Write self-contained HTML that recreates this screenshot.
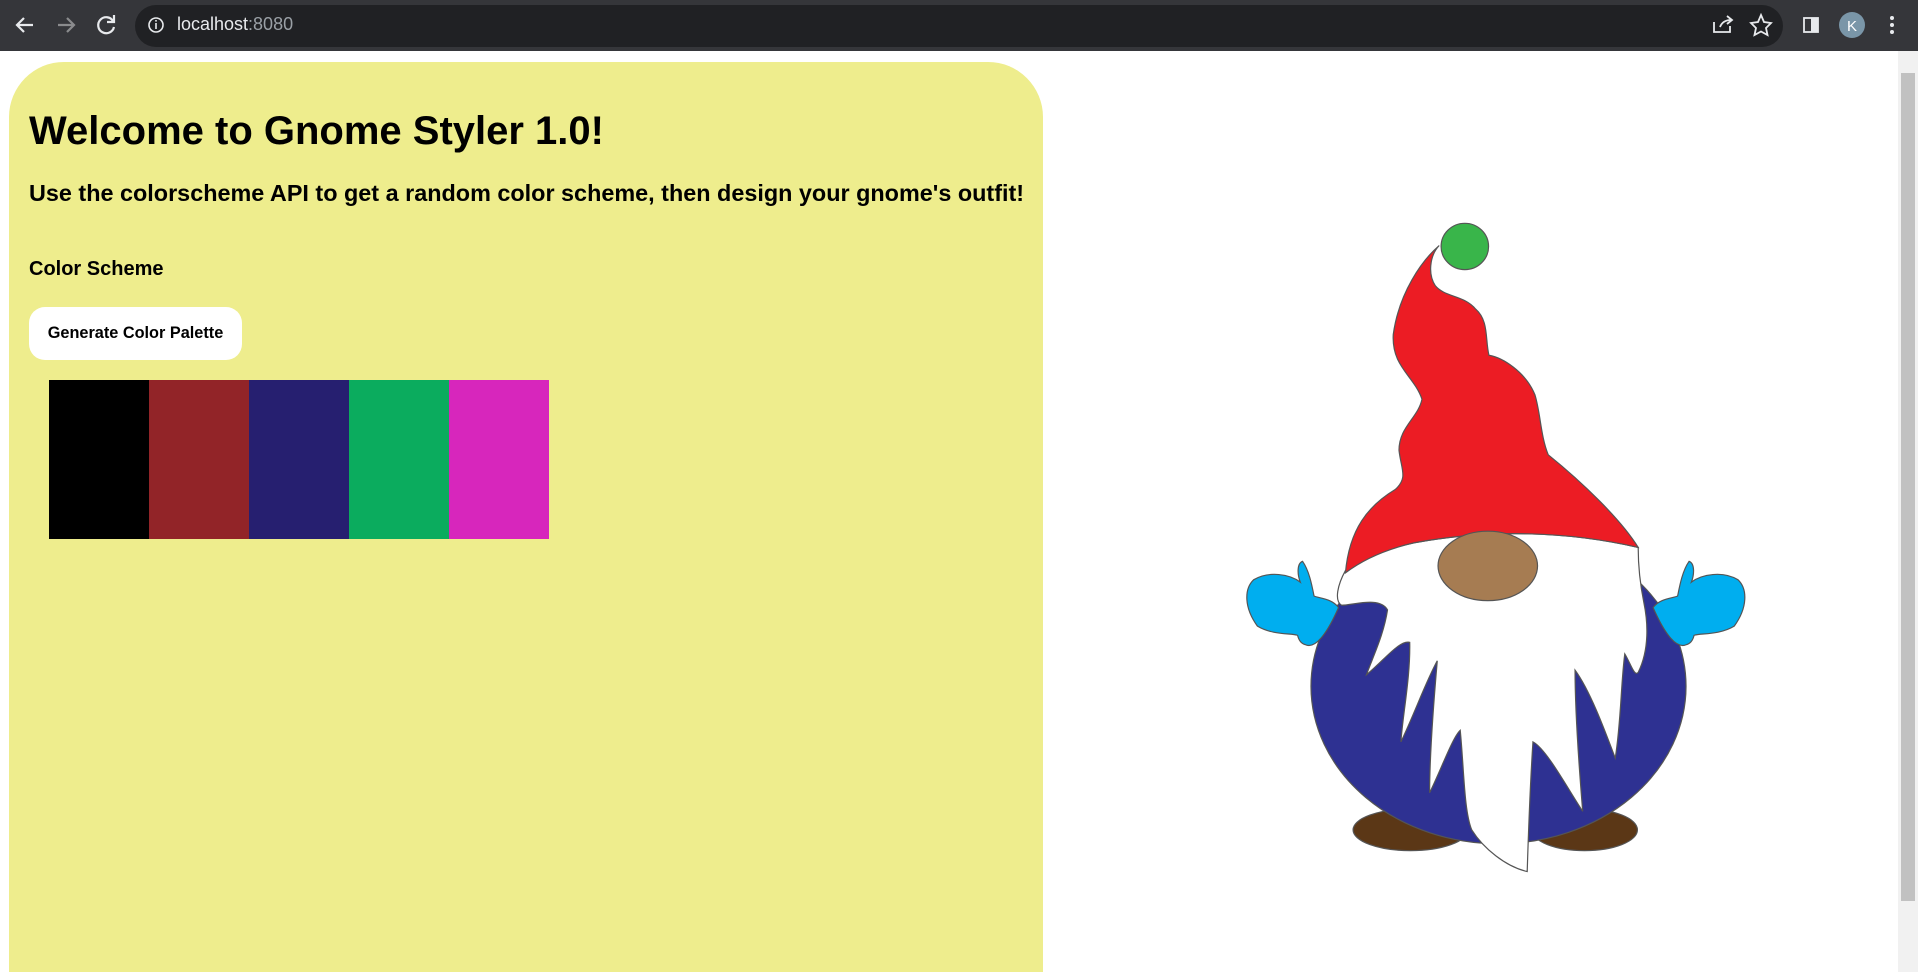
<!DOCTYPE html>
<html><head><meta charset="utf-8"><style>
*{margin:0;padding:0;box-sizing:border-box}
html,body{width:1918px;height:972px;overflow:hidden;background:#fff;font-family:"Liberation Sans",Arial,sans-serif}
.top{position:absolute;left:0;top:0;width:1918px;height:51px;background:#35363a}
.addr{position:absolute;left:135px;top:5px;width:1648px;height:42px;border-radius:21px;background:#202124}
.url{position:absolute;left:177px;top:14px;font-size:18px;color:#e8eaed}
.url span{color:#9aa0a6}
.panel{position:absolute;left:9px;top:62px;width:1034px;height:910px;background:#eeed8d;border-radius:55px 55px 0 0}
h1{position:absolute;left:29px;top:109px;font-size:40px;font-weight:bold;white-space:nowrap}
h3{position:absolute;left:29px;top:180px;font-size:23.4px;font-weight:bold;white-space:nowrap}
.cs{position:absolute;left:29px;top:258px;font-size:20px;font-weight:bold}
.btn{position:absolute;left:29px;top:307px;width:213px;height:53px;background:#fff;border-radius:16px;font-size:16.3px;font-weight:bold;text-align:center;line-height:53px}
.sw{position:absolute;top:380px;width:100px;height:159px}
.sb{position:absolute;left:1898px;top:51px;width:20px;height:921px;background:#f1f1f1}
.th{position:absolute;left:1901px;top:73px;width:14px;height:828px;background:#c1c1c1}
</style></head><body>
<div class="top">
<div class="addr"></div>
<svg width="1918" height="51" style="position:absolute;left:0;top:0">
<g stroke="#e8eaed" stroke-width="2.2" fill="none">
<path d="M33 25H17M24 18l-7 7 7 7"/>
<path d="M58 25h16M67 18l7 7-7 7" stroke="#8a8b8d"/>
<path d="M113 21a8 8 0 1 0 1 6M114 15v7h-7"/>
</g>
<circle cx="156" cy="25" r="7" stroke="#e8eaed" stroke-width="1.6" fill="none"/>
<rect x="155.2" y="23" width="1.6" height="6" fill="#e8eaed"/><rect x="155.2" y="20" width="1.6" height="1.6" fill="#e8eaed"/>
<g stroke="#e8eaed" stroke-width="1.8" fill="none">
<path d="M1714 22v10h16v-6M1720 27c2-5 6-7 11-7M1727 16l5 4-5 4"/>
<path d="M1761 15l3 7 7 1-5 5 1.5 7-6.5-3.5-6.5 3.5 1.5-7-5-5 7-1z"/>
<rect x="1804" y="18" width="14" height="14"/>
</g>
<rect x="1811" y="18" width="7" height="14" fill="#e8eaed"/>
<circle cx="1852" cy="25" r="13" fill="#7a96a8"/>
<text x="1852" y="31" font-size="15" fill="#fff" text-anchor="middle" font-family="Liberation Sans">K</text>
<circle cx="1892" cy="18" r="2" fill="#e8eaed"/><circle cx="1892" cy="25" r="2" fill="#e8eaed"/><circle cx="1892" cy="32" r="2" fill="#e8eaed"/>
</svg>
<div class="url">localhost<span>:8080</span></div>
</div>
<div class="panel"></div>
<h1>Welcome to Gnome Styler 1.0!</h1>
<h3>Use the colorscheme API to get a random color scheme, then design your gnome's outfit!</h3>
<div class="cs">Color Scheme</div>
<div class="btn">Generate Color Palette</div>
<div class="sw" style="left:49px;background:#000"></div>
<div class="sw" style="left:149px;background:#922428"></div>
<div class="sw" style="left:249px;background:#261f70"></div>
<div class="sw" style="left:349px;background:#0bac5e"></div>
<div class="sw" style="left:449px;background:#d726bc"></div>
<div class="sb"></div><div class="th"></div>
<svg width="1918" height="972" style="position:absolute;left:0;top:0">
<g transform="translate(1200,177) scale(0.3827,0.463)" stroke="#555" stroke-width="1.2">
<g vector-effect="non-scaling-stroke">
<ellipse vector-effect="non-scaling-stroke" cx="550" cy="1410" rx="150" ry="45" fill="#5b3716"/>
<ellipse vector-effect="non-scaling-stroke" cx="1005" cy="1410" rx="138" ry="45" fill="#5b3716"/>
<ellipse vector-effect="non-scaling-stroke" cx="780" cy="1100" rx="490" ry="340" fill="#2e3192"/>
<path vector-effect="non-scaling-stroke" fill="#fff" d="M380 850C360 880 350 915 370 925C400 925 470 905 490 935C480 990 450 1040 435 1075C480 1045 520 1000 548 1005C550 1080 530 1160 525 1220C560 1160 590 1090 620 1045C610 1140 600 1250 600 1330C630 1280 660 1210 680 1195C690 1280 690 1370 710 1410C740 1450 800 1490 855 1500C858 1420 862 1320 870 1220C905 1235 960 1320 1000 1370C990 1270 980 1150 980 1065C1020 1110 1060 1200 1085 1255C1100 1180 1100 1090 1110 1030C1125 1050 1135 1080 1145 1070C1175 1020 1170 960 1160 920C1150 880 1145 840 1145 800C960 765 760 760 560 790C470 805 410 830 380 850Z"/>
<path vector-effect="non-scaling-stroke" fill="#ec1c24" d="M625 148C580 180 520 250 505 340C500 410 560 430 580 480C570 520 520 540 520 590C525 630 545 650 510 675C440 710 390 760 380 855C420 830 480 805 560 790C760 760 960 765 1145 800C1100 740 1000 660 910 600C890 560 890 510 875 470C850 420 790 390 755 385C745 350 755 310 720 285C690 255 640 260 615 235C595 210 600 170 625 148Z"/>
<ellipse vector-effect="non-scaling-stroke" cx="692" cy="150" rx="62" ry="50" fill="#39b54a"/>
<ellipse vector-effect="non-scaling-stroke" cx="752" cy="840" rx="130" ry="75" fill="#a67c52"/>
<path vector-effect="non-scaling-stroke" fill="#00aeef" d="M275 1010C300 1020 330 990 362 930C345 910 310 910 298 905C292 880 285 850 268 830C252 835 255 860 262 875C235 858 180 850 140 870C115 890 115 930 150 970C190 990 240 985 255 990C258 1000 265 1008 275 1010Z"/>
<path vector-effect="non-scaling-stroke" fill="#00aeef" transform="translate(1546,0) scale(-1,1)" d="M275 1010C300 1020 330 990 362 930C345 910 310 910 298 905C292 880 285 850 268 830C252 835 255 860 262 875C235 858 180 850 140 870C115 890 115 930 150 970C190 990 240 985 255 990C258 1000 265 1008 275 1010Z"/>
</g>
</g>
</svg>
</body></html>
